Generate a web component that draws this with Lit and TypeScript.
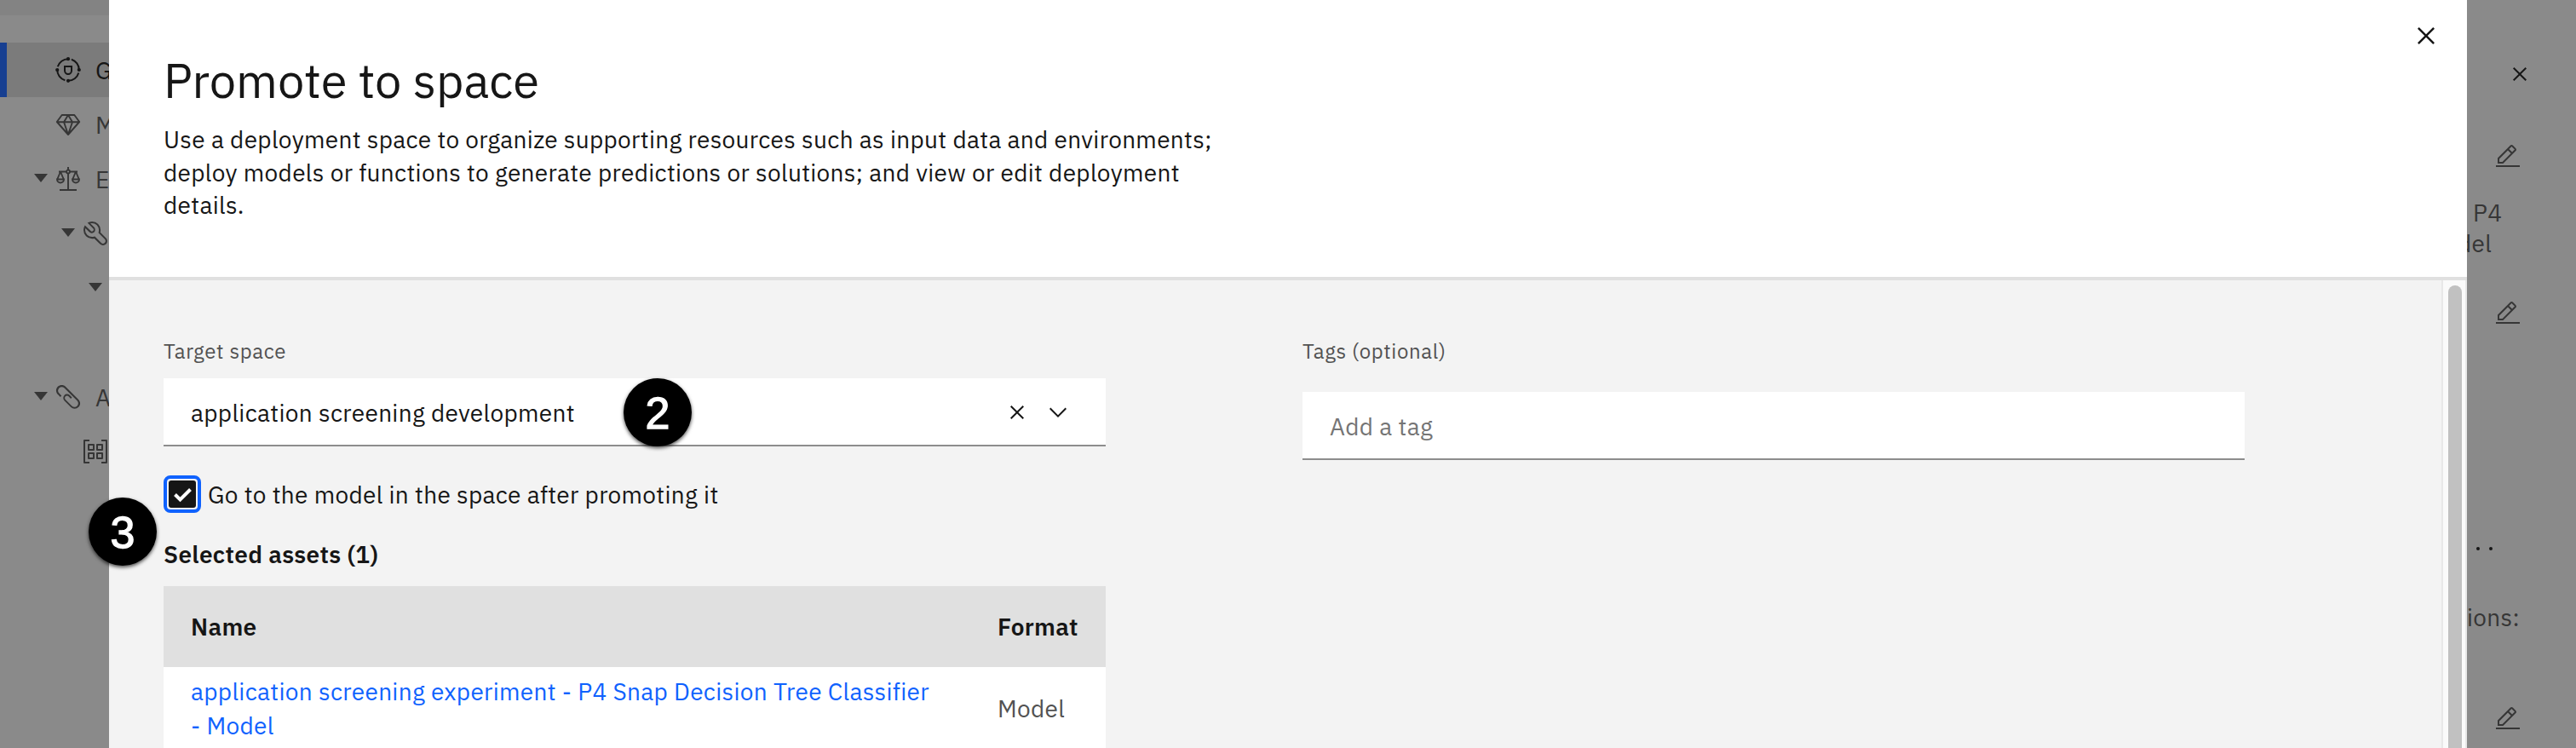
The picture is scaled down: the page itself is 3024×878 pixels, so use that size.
import { LitElement, html, css, svg } from "lit";
import { customElement } from "lit/decorators.js";

const ICONS: Record<string, unknown> = {
  governance: svg`<path d="M12 12v4.800a4 4.200 0 0 0 8 0V12Z" fill="none" stroke="currentColor" stroke-width="2"/><circle cx="16" cy="16" r="12.800" fill="none" stroke="currentColor" stroke-width="2" stroke-dasharray="16.500 3.600" stroke-dashoffset="-3.600"/><circle cx="16" cy="3.200" r="2.100"/><circle cx="28.800" cy="16" r="2.100"/><circle cx="16" cy="28.800" r="2.100"/><circle cx="3.200" cy="16" r="2.100"/>`,
  gem: svg`<path fill="none" stroke="currentColor" stroke-width="1.900" stroke-linejoin="round" d="M8.700 5h14.600L29.200 13 16 28 2.800 13Z M2.800 13.200h26.400 M16 5l-5 8.200L16 28l5-14.800Z"/>`,
  scales: svg`<path fill="none" stroke="currentColor" stroke-width="1.900" d="M16 2v4M16 9.500V28M6 29h20M5 7.500h9M18 7.500h9M7 7.500 3.200 16.500M7 7.500l3.800 9M25 7.500l-3.800 9M25 7.500l3.800 9M3 16.500h8a4 4 0 0 1-8 0ZM21 16.500h8a4 4 0 0 1-8 0Z"/><circle cx="16" cy="7.500" r="2" fill="none" stroke="currentColor" stroke-width="1.800"/>`,
  wrench: svg`<path fill-rule="evenodd" d="M12.100 2a9.800 9.800 0 0 0-5.400 1.600l6.400 6.400a2.100 2.100 0 0 1 .2 3 2.100 2.100 0 0 1-3-.2L3.700 6.400A9.840 9.840 0 0 0 2 12.100 10.140 10.140 0 0 0 12.100 22.200a10.900 10.900 0 0 0 2.600-.3l6.700 6.700a5 5 0 0 0 7.100-7.100l-6.700-6.700a10.900 10.900 0 0 0 .3-2.600A10 10 0 0 0 12.100 2Zm8 10.100a7.610 7.610 0 0 1-.3 2.100l-.3 1.100.8.8 6.700 6.700a2.880 2.880 0 0 1 .9 2.100A2.720 2.720 0 0 1 27 27a2.900 2.900 0 0 1-4.200 0l-6.700-6.700-.8-.8-1.100.3a7.610 7.610 0 0 1-2.100.3 8.270 8.270 0 0 1-5.700-2.300A7.630 7.630 0 0 1 4 12.100a8.330 8.330 0 0 1 .3-2.200l4.400 4.400a4.140 4.140 0 0 0 5.900.2 4.140 4.140 0 0 0-.2-5.900L10 4.200a6.450 6.450 0 0 1 2-.3 8.270 8.270 0 0 1 5.700 2.300A8.490 8.490 0 0 1 20.100 12.100Z"/>`,
  clip: svg`<path d="M28.100 18.900 13.100 3.900c-2.500-2.600-6.600-2.600-9.200-.1S1.300 10.500 3.900 13l.1.100L6.800 16l1.400-1.400L5.400 11.600c-1.700-1.700-1.700-4.500 0-6.200s4.500-1.700 6.200 0L26.500 20.200c1.800 1.700 1.800 4.500.1 6.200s-4.500 1.800-6.200.1l-.1-.1L12.800 18.900c-1-1.100-.9-2.700.1-3.700 1-.9 2.600-.9 3.600 0L19.100 17.900l1.400-1.400-2.700-2.700c-1.800-1.700-4.600-1.600-6.300.2-1.600 1.700-1.600 4.400 0 6.200l7.500 7.500c2.500 2.600 6.600 2.600 9.200.1S30.700 21.500 28.100 18.900Z"/>`,
  grid: svg`<path fill="none" stroke="currentColor" stroke-width="2" stroke-linejoin="round" d="M9 3H3v26h6M23 3h6v26h-6M8 8h6v6H8ZM18 8h6v6h-6ZM8 18h6v6H8ZM18 18h6v6h-6Z"/>`,
  edit: svg`<path fill-rule="evenodd" d="M2 26h28v2H2zM25.400 9c.8-.8.8-2 0-2.800l-3.600-3.600c-.8-.8-2-.8-2.800 0l-15 15V24h6.400zM20.400 4 24 7.600l-3 3L17.400 7zM6 22v-3.600l10-10 3.600 3.600-10 10z"/>`,
  close: svg`<path d="M17.414 16 24 9.414 22.586 8 16 14.586 9.414 8 8 9.414 14.586 16 8 22.586 9.414 24 16 17.414 22.586 24 24 22.586z"/>`,
  chevron: svg`<path d="M16 22 6 12l1.400-1.400 8.600 8.600 8.600-8.600L26 12z"/>`,
};

const icon = (name: string, cls = "") =>
  html`<svg class="icon ${cls}" viewBox="0 0 32 32" fill="currentColor">${ICONS[name]}</svg>`;

const NAV = [
  { icon: "governance", label: "G", level: 0, open: false, active: true },
  { icon: "gem", label: "M", level: 0, open: false, active: false },
  { icon: "scales", label: "E", level: 0, open: true, active: false },
  { icon: "wrench", label: "", level: 1, open: true, active: false },
  { icon: "", label: "", level: 2, open: true, active: false },
  { icon: "", label: "", level: 0, open: false, active: false },
  { icon: "clip", label: "A", level: 0, open: true, active: false },
  { icon: "grid", label: "", level: 1, open: false, active: false },
];

@customElement("app-root")
export class AppRoot extends LitElement {
  static styles = css`
    :host {
      display: block;
      font-family: "IBM Plex Sans", "Noto Sans", sans-serif;
      font-size: 28px;
      letter-spacing: 0.32px;
      color: #161616;
    }
    * { box-sizing: border-box; }
    .page {
      display: grid;
      grid-template-columns: 128px 2768px 128px;
      grid-template-rows: 878px;
      height: 878px;
      overflow: hidden;
      position: relative;
      background: #8a8a8a;
    }
    .icon { width: 32px; height: 32px; flex: none; display: block; }
    .nav { overflow: hidden; color: #363636; }
    .strip { height: 18px; background: #838383; margin-bottom: 32px; }
    .item { height: 64px; display: flex; align-items: center; white-space: nowrap; padding-left: 40px; }
    .item.l1 { padding-left: 72px; }
    .item.l2 { padding-left: 104px; }
    .item.active { background: #7b7b7b; border-left: 8px solid #173f91; padding-left: 32px; color: #161616; }
    .twisty { width: 16px; flex: none; margin-right: 8px; }
    .twisty.open::before {
      content: ""; display: block; border: 8px solid transparent; border-top: 10px solid #363636; border-bottom: 0; margin-bottom: 2px;
    }
    .label { margin-left: 16px; }
    .modal { display: flex; flex-direction: column; background: #fff; min-width: 0; }
    .head { height: 329px; border-bottom: 4px solid #e0e0e0; padding: 62px 28px 0 64px; display: flex; justify-content: space-between; flex: none; }
    h1 { font-weight: 400; font-size: 56px; line-height: 64px; letter-spacing: 0; margin: 0 0 19px; }
    .desc { margin: 0; line-height: 38.500px; white-space: nowrap; }
    .head .icon { width: 40px; height: 40px; margin-top: -40px; }
    .body { display: flex; flex: 1; background: #f3f3f3; min-height: 0; }
    .form { flex: 1; display: flex; gap: 231px; padding: 67px 0 0 64px; min-width: 0; overflow: hidden; }
    .col { width: 1106px; flex: none; }
    .field-label { font-size: 24px; letter-spacing: 0.64px; line-height: 32px; color: #525252; margin-bottom: 16px; }
    .tags .field-label { margin-bottom: 32px; }
    .input { height: 80px; background: #fff; box-shadow: inset 0 -2px #8d8d8d; padding: 0 32px; display: flex; align-items: center; }
    .input .value { flex: 1; }
    .input .icon { margin-left: 16px; }
    .input .chev { margin-right: 8px; }
    .placeholder { color: #757575; }
    .check { display: flex; align-items: center; margin-top: 34px; height: 44px; }
    .box { width: 44px; height: 44px; border: 4px solid #0f62fe; border-radius: 8px; padding: 2px; margin-right: 8px; }
    .box svg { display: block; width: 32px; height: 32px; background: #161616; border-radius: 3px; }
    h2 { font-size: 28px; font-weight: 600; line-height: 40px; margin: 29px 0 17px; }
    .row { display: grid; grid-template-columns: 1fr 127px; padding-left: 32px; align-items: center; height: 95px; background: #e0e0e0; font-weight: 600; }
    .row.data { background: #fff; font-weight: 400; height: 97px; line-height: 40px; color: #525252; }
    .link { color: #0f62fe; white-space: nowrap; }
    .track { width: 30px; border: solid #e8e8e8; border-width: 0 2px; background: #fafafa; padding: 6px 4px 0 6px; }
    .thumb { width: 16px; height: 543px; border-radius: 8px 8px 0 0; background: #c1c1c1; }
    .side { color: #363636; overflow: hidden; white-space: nowrap; line-height: 36px; }
    .side .icon { margin-left: 32px; }
    .side .x { margin: 71px 0 65px 46px; color: #161616; }
    .side .lines { margin: 32px 0 48px; }
    .dots { display: flex; gap: 11px; margin: 257.500px 0 0 11px; height: 4px; }
    .dots i { width: 4px; height: 4px; border-radius: 50%; background: #161616; }
    .p4 { padding-left: 7px; }
    .del { margin-left: -11px; }
    .ions { margin: 61.500px 0 85px; }
    .badge {
      position: absolute; width: 80px; height: 80px; border-radius: 50%; background: #000; color: #fff; letter-spacing: 0;
      font: 400 52px/82px "Liberation Sans", sans-serif; -webkit-text-stroke: 1.300px #fff; text-align: center; box-shadow: 0 2px 4px rgba(0,0,0,.7);
    }
    .two { left: 732px; top: 444px; }
    .three { left: 104px; top: 584px; }
  `;

  render() {
    return html`<div class="page">
      <nav class="nav">
        <div class="strip"></div>
        ${NAV.map(
          (n) => html`<div class="item l${n.level} ${n.active ? "active" : ""}">
            <span class="twisty ${n.open ? "open" : ""}"></span>${n.icon ? icon(n.icon) : ""}${n.label ? html`<span class="label">${n.label}</span>` : ""}
          </div>`
        )}
      </nav>
      <main class="modal">
        <header class="head">
          <div>
            <h1>Promote to space</h1>
            <p class="desc">
              Use a deployment space to organize supporting resources such as input data and environments;<br />deploy models or
              functions to generate predictions or solutions; and view or edit deployment<br />details.
            </p>
          </div>
          ${icon("close")}
        </header>
        <div class="body">
          <div class="form">
            <section class="col">
              <div class="field-label">Target space</div>
              <div class="input"><span class="value">application screening development</span>${icon("close")}${icon("chevron", "chev")}</div>
              <div class="check">
                <span class="box"><svg viewBox="0 0 32 32"><path d="M7.500 16.500l6 6L25.500 10.500" fill="none" stroke="#fff" stroke-width="4" /></svg></span>
                <span>Go to the model in the space after promoting it</span>
              </div>
              <h2>Selected assets (1)</h2>
              <div class="row"><span>Name</span><span>Format</span></div>
              <div class="row data">
                <span class="link">application screening experiment - P4 Snap Decision Tree Classifier<br />- Model</span><span>Model</span>
              </div>
            </section>
            <section class="col tags">
              <div class="field-label">Tags (optional)</div>
              <div class="input placeholder">Add a tag</div>
            </section>
          </div>
          <div class="track"><div class="thumb"></div></div>
        </div>
      </main>
      <aside class="side">
        ${icon("close", "x")} ${icon("edit")}
        <div class="lines"><div class="p4">P4</div><div class="del">del</div></div>
        ${icon("edit")}
        <div class="dots"><i></i><i></i></div>
        <div class="ions">ions:</div>
        ${icon("edit")}
      </aside>
      <span class="badge two">2</span>
      <span class="badge three">3</span>
    </div>`;
  }
}
